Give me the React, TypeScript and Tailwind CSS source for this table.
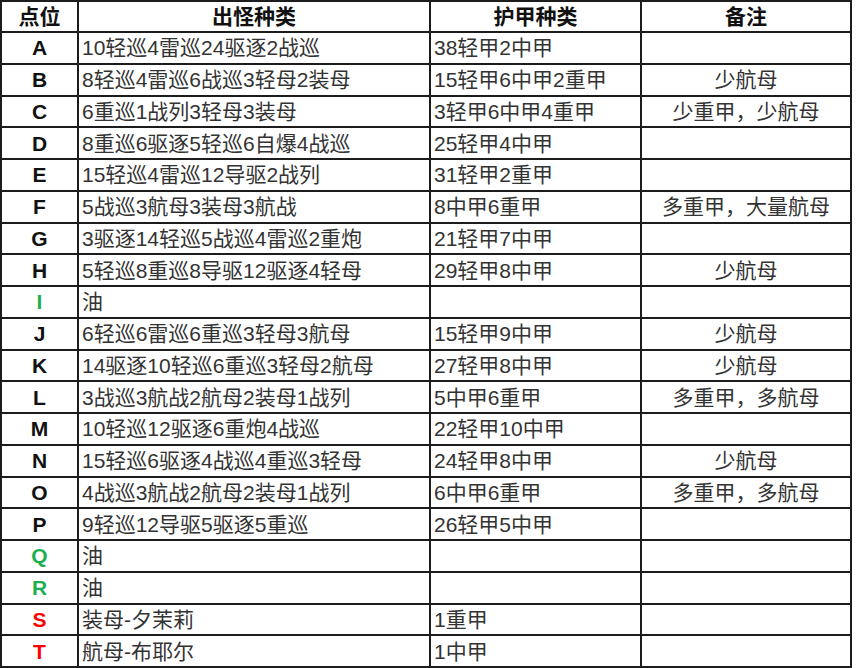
type Row = {
  id: string;
  color?: string;
  enemies: string;
  armor: string;
  note: string;
};

const rows: Row[] = [
  { id: "A", enemies: "10轻巡4雷巡24驱逐2战巡", armor: "38轻甲2中甲", note: "" },
  { id: "B", enemies: "8轻巡4雷巡6战巡3轻母2装母", armor: "15轻甲6中甲2重甲", note: "少航母" },
  { id: "C", enemies: "6重巡1战列3轻母3装母", armor: "3轻甲6中甲4重甲", note: "少重甲，少航母" },
  { id: "D", enemies: "8重巡6驱逐5轻巡6自爆4战巡", armor: "25轻甲4中甲", note: "" },
  { id: "E", enemies: "15轻巡4雷巡12导驱2战列", armor: "31轻甲2重甲", note: "" },
  { id: "F", enemies: "5战巡3航母3装母3航战", armor: "8中甲6重甲", note: "多重甲，大量航母" },
  { id: "G", enemies: "3驱逐14轻巡5战巡4雷巡2重炮", armor: "21轻甲7中甲", note: "" },
  { id: "H", enemies: "5轻巡8重巡8导驱12驱逐4轻母", armor: "29轻甲8中甲", note: "少航母" },
  { id: "I", color: "green", enemies: "油", armor: "", note: "" },
  { id: "J", enemies: "6轻巡6雷巡6重巡3轻母3航母", armor: "15轻甲9中甲", note: "少航母" },
  { id: "K", enemies: "14驱逐10轻巡6重巡3轻母2航母", armor: "27轻甲8中甲", note: "少航母" },
  { id: "L", enemies: "3战巡3航战2航母2装母1战列", armor: "5中甲6重甲", note: "多重甲，多航母" },
  { id: "M", enemies: "10轻巡12驱逐6重炮4战巡", armor: "22轻甲10中甲", note: "" },
  { id: "N", enemies: "15轻巡6驱逐4战巡4重巡3轻母", armor: "24轻甲8中甲", note: "少航母" },
  { id: "O", enemies: "4战巡3航战2航母2装母1战列", armor: "6中甲6重甲", note: "多重甲，多航母" },
  { id: "P", enemies: "9轻巡12导驱5驱逐5重巡", armor: "26轻甲5中甲", note: "" },
  { id: "Q", color: "green", enemies: "油", armor: "", note: "" },
  { id: "R", color: "green", enemies: "油", armor: "", note: "" },
  { id: "S", color: "red", enemies: "装母-夕茉莉", armor: "1重甲", note: "" },
  { id: "T", color: "red", enemies: "航母-布耶尔", armor: "1中甲", note: "" },
];

const cell = "flex items-center border-r-2 border-b-2 border-[#1c1c1c] overflow-hidden whitespace-nowrap";
const grid = "grid grid-cols-[77px_352px_211px_210px]";

const idColor = (c?: string) => {
  if (c === "green") return "text-[#1fae4f]";
  if (c === "red") return "text-[#ff0000]";
  return "text-[#111111]";
};

const App = () => {
  return (
    <div
      className="w-[860px] h-[668px] bg-white overflow-hidden"
      style={{ fontFamily: '"Liberation Sans", "Noto Sans CJK SC", sans-serif' }}
    >
      <div className="w-[852px] border-t-2 border-l-2 border-[#1c1c1c] text-[21px] leading-none">
        <div className={`${grid} h-[31px] font-bold text-[#111111]`}>
          <div className={`${cell} justify-center`}>点位</div>
          <div className={`${cell} justify-center`}>出怪种类</div>
          <div className={`${cell} justify-center`}>护甲种类</div>
          <div className={`${cell} justify-center`}>备注</div>
        </div>
        {rows.map((r) => (
          <div key={r.id} className={`${grid} h-[31.75px]`}>
            <div className={`${cell} justify-center font-bold ${idColor(r.color)}`}>{r.id}</div>
            <div className={`${cell} pl-[3px] text-[#333333]`}>{r.enemies}</div>
            <div className={`${cell} pl-[3px] text-[#333333]`}>{r.armor}</div>
            <div className={`${cell} justify-center text-[#333333]`}>{r.note}</div>
          </div>
        ))}
      </div>
    </div>
  );
};

export default App;
